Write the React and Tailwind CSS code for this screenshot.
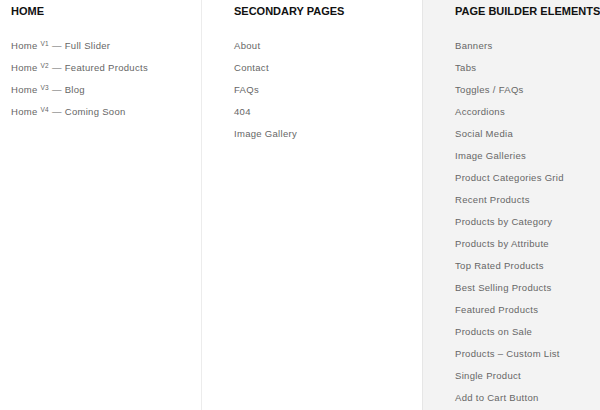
import React from 'react'

const home = [
  { v: 'V1', label: 'Full Slider' },
  { v: 'V2', label: 'Featured Products' },
  { v: 'V3', label: 'Blog' },
  { v: 'V4', label: 'Coming Soon' },
]

const secondary = ['About', 'Contact', 'FAQs', '404', 'Image Gallery']

const builder = [
  'Banners',
  'Tabs',
  'Toggles / FAQs',
  'Accordions',
  'Social Media',
  'Image Galleries',
  'Product Categories Grid',
  'Recent Products',
  'Products by Category',
  'Products by Attribute',
  'Top Rated Products',
  'Best Selling Products',
  'Featured Products',
  'Products on Sale',
  'Products – Custom List',
  'Single Product',
  'Add to Cart Button',
]

function Heading({ children }) {
  return (
    <h3 className="h-[22px] leading-[22px] text-[11px] font-bold uppercase text-[#111] whitespace-nowrap">
      {children}
    </h3>
  )
}

function Item({ children }) {
  return (
    <li className="h-[22px] leading-[22px] text-[9.5px] tracking-[0.3px] text-[#666] whitespace-nowrap">
      {children}
    </li>
  )
}

export default function App() {
  return (
    <div
      className="flex w-[600px] h-[410px] overflow-hidden bg-white"
      style={{ fontFamily: '"Liberation Sans", Arial, sans-serif' }}
    >
      <div className="w-[202px] shrink-0 border-r border-[#ececec] pl-[11px]">
        <Heading>Home</Heading>
        <ul className="mt-[13px]">
          {home.map((h) => (
            <Item key={h.v}>
              Home <span className="text-[6.5px] relative -top-[3px]">{h.v}</span> — {h.label}
            </Item>
          ))}
        </ul>
      </div>
      <div className="w-[220px] shrink-0 pl-[32px]">
        <Heading>Secondary Pages</Heading>
        <ul className="mt-[13px]">
          {secondary.map((s) => (
            <Item key={s}>{s}</Item>
          ))}
        </ul>
      </div>
      <div className="flex-1 bg-[#f3f3f3] border-l border-[#e6e6e6] pl-[32px]">
        <Heading>Page Builder Elements</Heading>
        <ul className="mt-[13px]">
          {builder.map((b) => (
            <Item key={b}>{b}</Item>
          ))}
        </ul>
      </div>
    </div>
  )
}
